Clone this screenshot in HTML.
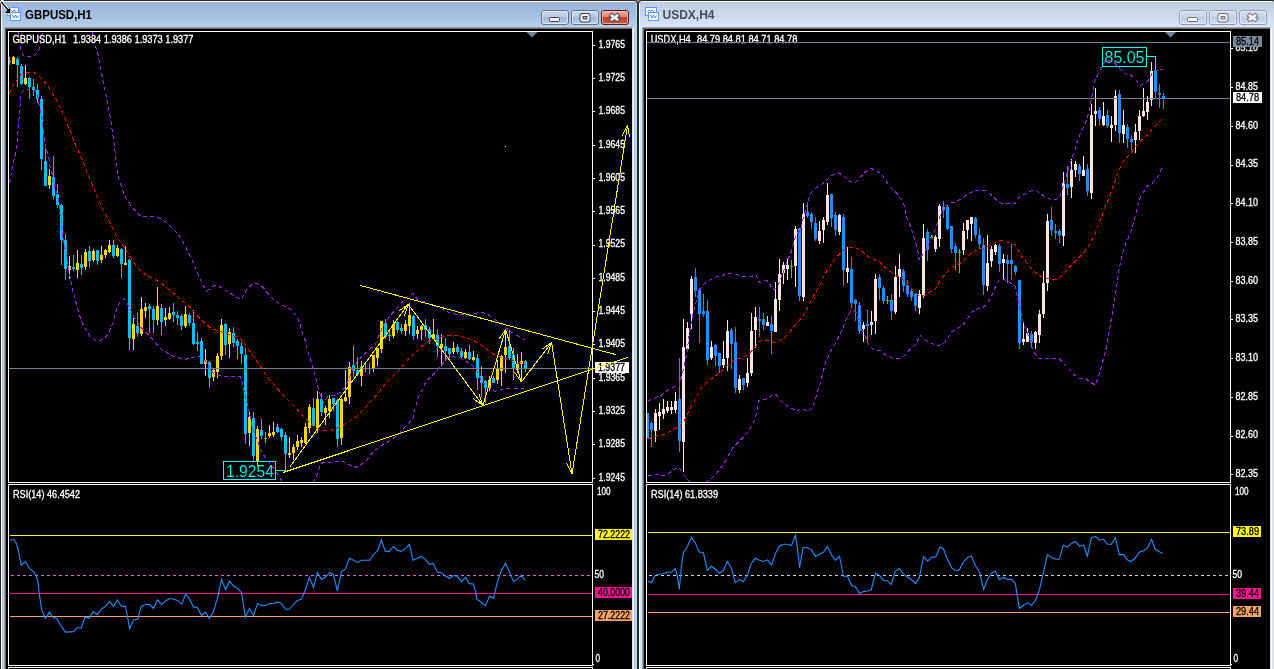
<!DOCTYPE html>
<html><head><meta charset="utf-8"><title>charts</title>
<style>html,body{margin:0;padding:0;background:#000;overflow:hidden}body{width:1274px;height:669px;position:relative}svg{position:absolute;left:0;top:0;display:block;will-change:transform}text{font-family:"Liberation Sans",sans-serif}</style>
</head><body>
<svg width="1274" height="669" viewBox="0 0 1274 669">
<defs>
<linearGradient id="ga" x1="0" y1="0" x2="0" y2="1"><stop offset="0" stop-color="#9ab2d6"/><stop offset="0.45" stop-color="#a2bedd"/><stop offset="1" stop-color="#b7d1ec"/></linearGradient>
<linearGradient id="gi" x1="0" y1="0" x2="0" y2="1"><stop offset="0" stop-color="#bccbde"/><stop offset="0.5" stop-color="#cad8e9"/><stop offset="1" stop-color="#d8e8f8"/></linearGradient>
<linearGradient id="gb" x1="0" y1="0" x2="0" y2="1"><stop offset="0" stop-color="#c9d9ec"/><stop offset="0.5" stop-color="#b6cbe4"/><stop offset="0.5" stop-color="#9fb9d9"/><stop offset="1" stop-color="#b9cfe8"/></linearGradient>
<linearGradient id="gbi" x1="0" y1="0" x2="0" y2="1"><stop offset="0" stop-color="#d3deec"/><stop offset="0.5" stop-color="#c6d4e6"/><stop offset="0.5" stop-color="#bccce1"/><stop offset="1" stop-color="#d0dcec"/></linearGradient>
<linearGradient id="gr" x1="0" y1="0" x2="0" y2="1"><stop offset="0" stop-color="#eeb4a4"/><stop offset="0.48" stop-color="#dd8068"/><stop offset="0.5" stop-color="#c4462a"/><stop offset="1" stop-color="#c8583c"/></linearGradient>
<clipPath id="cl"><rect x="9" y="32" width="583" height="450"/></clipPath>
<clipPath id="cr"><rect x="647" y="32" width="583" height="450"/></clipPath>
</defs>
<rect x="0" y="0" width="1274" height="669" fill="#000" />
<rect x="0" y="0" width="638" height="669" fill="#b7cfe9" />
<rect x="0" y="0" width="638" height="28" fill="url(#ga)" />
<rect x="0" y="0" width="1" height="669" fill="#2a2a2a" />
<rect x="637" y="0" width="1" height="669" fill="#2a2a2a" />
<rect x="0" y="0" width="638" height="1" fill="#2a2a2a" />
<rect x="1" y="1" width="1" height="669" fill="#fff" />
<rect x="1" y="1" width="636" height="1" fill="#fff" />
<rect x="636" y="2" width="1" height="669" fill="#9fe3f7" />
<polygon points="0,0 3.5,0 0,3.5" fill="#808080"/>
<polygon points="638,0 634.5,0 638,3.5" fill="#808080"/>
<path d="M0.5 4 Q0.5 0.5 4 0.5" stroke="#2a2a2a" stroke-width="1" fill="none"/>
<path d="M637.5 4 Q637.5 0.5 634 0.5" stroke="#2a2a2a" stroke-width="1" fill="none"/>
<rect x="4" y="27" width="630" height="642" fill="#a0a0a0" />
<rect x="5" y="28" width="629" height="641" fill="#696969" />
<rect x="632" y="28" width="1" height="669" fill="#e3e3e3" />
<rect x="633" y="27" width="1" height="669" fill="#fff" />
<rect x="6" y="29" width="626" height="640" fill="#000" />
<rect x="638" y="0" width="638" height="669" fill="#d6e3f3" />
<rect x="638" y="0" width="638" height="28" fill="url(#gi)" />
<rect x="638" y="0" width="1" height="669" fill="#2a2a2a" />
<rect x="1275" y="0" width="1" height="669" fill="#2a2a2a" />
<rect x="638" y="0" width="638" height="1" fill="#2a2a2a" />
<rect x="639" y="1" width="1" height="669" fill="#fff" />
<rect x="639" y="1" width="636" height="1" fill="#fff" />
<polygon points="638,0 641.5,0 638,3.5" fill="#808080"/>
<polygon points="1276,0 1272.5,0 1276,3.5" fill="#808080"/>
<path d="M638.5 4 Q638.5 0.5 642 0.5" stroke="#2a2a2a" stroke-width="1" fill="none"/>
<path d="M1275.5 4 Q1275.5 0.5 1272 0.5" stroke="#2a2a2a" stroke-width="1" fill="none"/>
<rect x="642" y="27" width="630" height="642" fill="#a0a0a0" />
<rect x="643" y="28" width="629" height="641" fill="#696969" />
<rect x="1270" y="28" width="1" height="669" fill="#e3e3e3" />
<rect x="1271" y="27" width="1" height="669" fill="#fff" />
<rect x="644" y="29" width="626" height="640" fill="#000" />
<g shape-rendering="crispEdges">
<rect x="7.5" y="7.5" width="11" height="8" fill="#fff" stroke="#5a98f8" stroke-width="1"/>
</g>
<polyline points="9.5,11.5 11,10 12.5,11.5 14,10 15.5,12" fill="none" stroke="#4a8cff" stroke-width="1" />
<g shape-rendering="crispEdges">
<rect x="10.5" y="12.5" width="10" height="8" fill="#fff" stroke="#5a98f8" stroke-width="1"/>
</g>
<polyline points="12.5,15 14,18 15.5,15 17,18 18.5,15.5" fill="none" stroke="#4a8cff" stroke-width="1" />
<g shape-rendering="crispEdges">
<rect x="645.5" y="7.5" width="11" height="8" fill="#fff" stroke="#5a98f8" stroke-width="1"/>
</g>
<polyline points="647.5,11.5 649,10 650.5,11.5 652,10 653.5,12" fill="none" stroke="#4a8cff" stroke-width="1" />
<g shape-rendering="crispEdges">
<rect x="648.5" y="12.5" width="10" height="8" fill="#fff" stroke="#5a98f8" stroke-width="1"/>
</g>
<polyline points="650.5,15 652,18 653.5,15 655,18 656.5,15.5" fill="none" stroke="#4a8cff" stroke-width="1" />
<text x="25" y="19" font-size="12" fill="#000" text-anchor="start" font-weight="bold" textLength="67" lengthAdjust="spacingAndGlyphs">GBPUSD,H1</text>
<text x="662.5" y="19" font-size="12" fill="#434d57" text-anchor="start" font-weight="bold" textLength="52" lengthAdjust="spacingAndGlyphs">USDX,H4</text>
<rect x="541.5" y="10.5" width="27" height="14" rx="2.5" fill="url(#gb)" stroke="#5f6f8f" stroke-width="1"/>
<rect x="542.5" y="11.5" width="25" height="12" rx="1.5" fill="none" stroke="#fff" stroke-opacity="0.55" stroke-width="1"/>
<rect x="549.5" y="17.5" width="10" height="4" rx="1" fill="#f4f4f4" stroke="#3c4254" stroke-width="1"/>
<rect x="571.5" y="10.5" width="27" height="14" rx="2.5" fill="url(#gb)" stroke="#5f6f8f" stroke-width="1"/>
<rect x="572.5" y="11.5" width="25" height="12" rx="1.5" fill="none" stroke="#fff" stroke-opacity="0.55" stroke-width="1"/>
<rect x="581.5" y="15" width="7" height="5.5" rx="1" fill="none" stroke="#3c4254" stroke-width="4"/>
<rect x="581.5" y="15" width="7" height="5.5" rx="1" fill="none" stroke="#f4f4f4" stroke-width="2.2"/>
<rect x="601.5" y="10.5" width="27" height="14" rx="2.5" fill="url(#gr)" stroke="#501820" stroke-width="1"/>
<rect x="602.5" y="11.5" width="25" height="12" rx="1.5" fill="none" stroke="#f6cfc6" stroke-opacity="0.7" stroke-width="1"/>
<path d="M611.8 15.6L617.2 19.4M617.2 15.6L611.8 19.4" stroke="#3c4254" stroke-width="4.6" stroke-linecap="square" fill="none"/>
<path d="M611.8 15.6L617.2 19.4M617.2 15.6L611.8 19.4" stroke="#f4f4f4" stroke-width="2.7" stroke-linecap="square" fill="none"/>
<rect x="1179.5" y="10.5" width="27" height="14" rx="2.5" fill="url(#gbi)" stroke="#8f9bbb" stroke-width="1"/>
<rect x="1180.5" y="11.5" width="25" height="12" rx="1.5" fill="none" stroke="#fff" stroke-opacity="0.55" stroke-width="1"/>
<rect x="1187.5" y="17.5" width="10" height="4" rx="1" fill="#f4f4f4" stroke="#6a7288" stroke-width="1"/>
<rect x="1209.5" y="10.5" width="27" height="14" rx="2.5" fill="url(#gbi)" stroke="#8f9bbb" stroke-width="1"/>
<rect x="1210.5" y="11.5" width="25" height="12" rx="1.5" fill="none" stroke="#fff" stroke-opacity="0.55" stroke-width="1"/>
<rect x="1219.5" y="15" width="7" height="5.5" rx="1" fill="none" stroke="#6a7288" stroke-width="4"/>
<rect x="1219.5" y="15" width="7" height="5.5" rx="1" fill="none" stroke="#f4f4f4" stroke-width="2.2"/>
<rect x="1239.5" y="10.5" width="27" height="14" rx="2.5" fill="url(#gbi)" stroke="#8f9bbb" stroke-width="1"/>
<rect x="1240.5" y="11.5" width="25" height="12" rx="1.5" fill="none" stroke="#fff" stroke-opacity="0.55" stroke-width="1"/>
<path d="M1249.8 15.6L1255.2 19.4M1255.2 15.6L1249.8 19.4" stroke="#6a7288" stroke-width="4.6" stroke-linecap="square" fill="none"/>
<path d="M1249.8 15.6L1255.2 19.4M1255.2 15.6L1249.8 19.4" stroke="#f4f4f4" stroke-width="2.7" stroke-linecap="square" fill="none"/>
<g shape-rendering="crispEdges">
<g clip-path="url(#cl)">
<path d="M13 56h1v8h-1zM12 57h3v7h-3zM25 65h1v20h-1zM24 78h3v6h-3zM49 169h1v20h-1zM48 176h3v9h-3zM69 256h1v23h-1zM68 266h3v4h-3zM77 250h1v28h-1zM76 263h3v7h-3zM85 249h1v21h-1zM84 252h3v15h-3zM93 249h1v13h-1zM92 251h3v9h-3zM101 246h1v17h-1zM100 255h3v5h-3zM105 249h1v9h-1zM104 250h3v5h-3zM109 240h1v13h-1zM108 245h3v7h-3zM117 245h1v12h-1zM116 248h3v8h-3zM125 246h1v19h-1zM124 263h3v2h-3zM133 318h1v32h-1zM132 324h3v15h-3zM141 297h1v39h-1zM140 309h3v25h-3zM145 303h1v15h-1zM144 307h3v4h-3zM157 287h1v38h-1zM156 306h3v14h-3zM165 308h1v18h-1zM164 317h3v3h-3zM169 307h1v13h-1zM168 313h3v6h-3zM185 306h1v22h-1zM184 314h3v12h-3zM205 349h1v27h-1zM204 360h3v4h-3zM213 368h1v13h-1zM212 370h3v7h-3zM217 353h1v25h-1zM216 356h3v16h-3zM221 319h1v41h-1zM220 325h3v31h-3zM229 328h1v30h-1zM228 332h3v12h-3zM249 412h1v34h-1zM248 417h3v16h-3zM257 426h1v41h-1zM256 429h3v33h-3zM269 425h1v13h-1zM268 433h3v3h-3zM273 422h1v15h-1zM272 432h3v3h-3zM289 437h1v21h-1zM288 453h3v2h-3zM293 444h1v16h-1zM292 447h3v6h-3zM297 435h1v15h-1zM296 441h3v6h-3zM301 437h1v10h-1zM300 440h3v3h-3zM305 423h1v21h-1zM304 427h3v16h-3zM309 404h1v29h-1zM308 407h3v21h-3zM317 391h1v42h-1zM316 399h3v29h-3zM325 406h1v19h-1zM324 408h3v5h-3zM329 395h1v23h-1zM328 399h3v12h-3zM341 398h1v47h-1zM340 399h3v39h-3zM345 370h1v32h-1zM344 397h3v4h-3zM349 362h1v42h-1zM348 367h3v30h-3zM361 361h1v25h-1zM360 367h3v9h-3zM373 355h1v17h-1zM372 355h3v13h-3zM377 348h1v18h-1zM376 348h3v10h-3zM381 321h1v32h-1zM380 321h3v28h-3zM393 320h1v18h-1zM392 324h3v12h-3zM405 320h1v16h-1zM404 324h3v7h-3zM409 303h1v31h-1zM408 315h3v11h-3zM417 326h1v13h-1zM416 330h3v4h-3zM421 325h1v15h-1zM420 326h3v4h-3zM433 319h1v21h-1zM432 334h3v5h-3zM441 334h1v32h-1zM440 344h3v4h-3zM453 342h1v12h-1zM452 348h3v4h-3zM465 349h1v10h-1zM464 352h3v6h-3zM473 351h1v10h-1zM472 357h3v3h-3zM489 376h1v15h-1zM488 380h3v8h-3zM497 360h1v24h-1zM496 369h3v11h-3zM501 355h1v31h-1zM500 356h3v15h-3zM505 329h1v44h-1zM504 347h3v8h-3zM517 354h1v19h-1zM516 364h3v6h-3zM521 352h1v28h-1zM520 361h3v3h-3z" fill="#ffd400"/>
<path d="M17 57h1v30h-1zM16 59h3v6h-3zM21 64h1v21h-1zM20 66h3v18h-3zM29 77h1v22h-1zM28 78h3v9h-3zM33 79h1v17h-1zM32 87h3v3h-3zM37 84h1v19h-1zM36 90h3v9h-3zM41 96h1v74h-1zM40 99h3v60h-3zM45 148h1v38h-1zM44 161h3v25h-3zM53 156h1v43h-1zM52 177h3v19h-3zM57 184h1v24h-1zM56 194h3v11h-3zM61 204h1v61h-1zM60 205h3v35h-3zM65 234h1v46h-1zM64 240h3v29h-3zM73 255h1v16h-1zM72 267h3v2h-3zM81 255h1v20h-1zM80 264h3v4h-3zM89 246h1v22h-1zM88 251h3v10h-3zM97 250h1v15h-1zM96 250h3v11h-3zM113 240h1v18h-1zM112 245h3v11h-3zM121 248h1v30h-1zM120 249h3v15h-3zM129 259h1v91h-1zM128 260h3v78h-3zM137 313h1v24h-1zM136 326h3v7h-3zM149 304h1v29h-1zM148 306h3v3h-3zM153 306h1v27h-1zM152 309h3v11h-3zM161 304h1v31h-1zM160 308h3v14h-3zM173 303h1v19h-1zM172 312h3v3h-3zM177 311h1v14h-1zM176 315h3v3h-3zM181 314h1v16h-1zM180 316h3v10h-3zM189 313h1v13h-1zM188 315h3v8h-3zM193 310h1v35h-1zM192 323h3v21h-3zM197 332h1v19h-1zM196 342h3v2h-3zM201 338h1v26h-1zM200 341h3v23h-3zM209 361h1v27h-1zM208 362h3v16h-3zM225 323h1v32h-1zM224 324h3v21h-3zM233 327h1v20h-1zM232 333h3v10h-3zM237 339h1v20h-1zM236 341h3v5h-3zM241 342h1v22h-1zM240 346h3v8h-3zM245 348h1v96h-1zM244 355h3v79h-3zM253 412h1v49h-1zM252 418h3v38h-3zM261 419h1v20h-1zM260 430h3v6h-3zM277 424h1v9h-1zM276 427h3v5h-3zM281 428h1v13h-1zM280 429h3v8h-3zM285 432h1v38h-1zM284 435h3v19h-3zM313 398h1v28h-1zM312 408h3v18h-3zM321 393h1v23h-1zM320 399h3v13h-3zM333 398h1v13h-1zM332 398h3v6h-3zM337 399h1v48h-1zM336 400h3v39h-3zM353 346h1v31h-1zM352 365h3v6h-3zM357 357h1v19h-1zM356 370h3v4h-3zM385 319h1v20h-1zM384 323h3v14h-3zM397 321h1v12h-1zM396 322h3v8h-3zM401 324h1v10h-1zM400 328h3v3h-3zM413 315h1v25h-1zM412 316h3v20h-3zM425 319h1v18h-1zM424 325h3v5h-3zM429 327h1v17h-1zM428 329h3v9h-3zM437 329h1v28h-1zM436 335h3v11h-3zM445 338h1v23h-1zM444 346h3v5h-3zM449 348h1v10h-1zM448 348h3v6h-3zM457 344h1v10h-1zM456 347h3v5h-3zM461 348h1v10h-1zM460 351h3v6h-3zM469 345h1v15h-1zM468 352h3v7h-3zM477 354h1v36h-1zM476 358h3v20h-3zM481 366h1v31h-1zM480 376h3v7h-3zM485 380h1v23h-1zM484 381h3v7h-3zM493 376h1v7h-1zM492 378h3v5h-3zM509 330h1v30h-1zM508 346h3v12h-3zM513 348h1v32h-1zM512 355h3v13h-3zM525 360h1v12h-1zM524 361h3v8h-3z" fill="#00bfff"/>
<path d="M9 57h1v8h-1zM8 61h3v1h-3zM265 432h1v11h-1zM264 438h3v1h-3zM365 363h1v9h-1zM364 368h3v1h-3zM369 363h1v11h-1zM368 368h3v1h-3zM389 330h1v11h-1zM388 335h3v1h-3z" fill="#00ff00"/>
<rect x="9" y="368" width="583" height="1" fill="#708090" />
<polyline points="18.7,32 19.5,42 20.6,50.8 23,55 28.7,57 35,55 38.8,50.8 40.5,42 42.5,32" fill="none" stroke="#a020f0" stroke-width="1" stroke-dasharray="4 3" />
<polyline points="9.6,183.4 12,169 15.8,152 17.4,140 19.3,115 20.5,100 21.2,93 24.3,89.8 27,89 31,89.5 35.6,91 38,97.5 39.4,106 41.3,116 42,122.6 43.8,134 45.7,145.7 48.8,158 50.4,169 52.7,175.5 55,188 58.2,196 59.8,213 61.4,220 62.6,234 66,254.7 70,276.6 72.6,290.4 75.7,301.4 79.6,315.5 83.5,325.7 89.8,336.7 97.7,341.4 104,339 108.7,333.6 113.4,321.8 116.5,309 119.7,303 124.4,299 127.5,303.7 132.2,314 140,326.5 151,337.5 162,350 173,356 184,359.5 191.6,358 197.8,355.7 205,360.4 209.6,367.5 213.5,373.8 219.8,375.8 229.2,376.9 240.2,376.9 242.6,384 245,395 248.9,410.6 252,426.3 256,437 259,445 261.6,451.4 265.3,457.7 270.4,464 275.4,470.9 279,476 282.3,481.6 283,483" fill="none" stroke="#a020f0" stroke-width="1" stroke-dasharray="4 3" />
<polyline points="313,483 313.7,481.6 317.5,474 320.6,464 324.4,462 332,462 343.2,461.5 349.5,464.6 355.8,467.5 360,465 365.9,461.3 370.6,455 376,449.5 381.6,445.6 387,442.4 392.6,438.5 398,435.4 402.8,429 408.3,423.6 413,418 414.6,411 416,405.5 417.7,399 420,393.8 423.2,388.3 425.6,382 431,376.5 436.5,371 441.3,365.6 446.8,358.5 453,356.6 459.3,357.7 465.6,360.8 471.9,364.8 476.6,370.3 479.7,377.3 481.3,382 484.4,384 489,387.5 494.6,391.4 503.3,389 512.7,388.6 523.7,388.6" fill="none" stroke="#a020f0" stroke-width="1" stroke-dasharray="4 3" />
<polyline points="92.2,32 95,44 98.5,57 102.8,79.7 105.4,92 109.1,112.4 110.4,117.6 114.8,149 117.3,171.7 118,175.5 122.6,189.7 124.2,195 132,207 138.3,214.6 143,216.2 155.6,216.2 166.6,222.5 178.3,234.2 185.4,246 193.2,262.5 196.6,270.8 201.3,281.8 206.8,291.2 213.8,285.7 218.6,285.7 229.5,292.8 241.3,299.8 244.2,293.7 247.2,288.9 252,284.7 256.1,283.5 259.7,284.7 263.3,287.7 268,293.7 273.5,299.6 279.4,303.8 285.4,306.8 291.4,309.8 296.2,315.2 299.1,321.2 300.7,327.1 302.4,333.7 305.1,339.7 307.7,351 311.7,363.5 315.6,377.7 318,387 320.3,395 323.4,402 328.1,396.5 336,395 342.3,391 346.2,385.5 348.6,379 353.3,368 357.3,361.6 362.7,355.7 368.3,350.6 375.2,344.7 379.2,335 384,324 391.8,313.8 401.2,303.5 407.5,296.5 413,293.3 417,298.8 428,303.5 440.5,308.3 451.5,313.8 464,314.5 473.4,313.8 481.3,312.2 486.8,313.8 492.3,317.7 504,326.3 511,331.8 517.4,335.7 522.9,338.9 525,340" fill="none" stroke="#a020f0" stroke-width="1" stroke-dasharray="4 3" />
<polyline points="9.3,93.6 12.4,86.6 16.8,80.4 20.6,74.7 25,72.5 33.8,72.5 38.2,75.3 43.8,81 48.2,86.6 52,93 56.4,99.6 59.5,106 62,111.6 64.5,117 67,123.3 69.6,129.6 72,135.2 74,141.5 77,147.8 79.4,153.5 82.1,159 84.6,165.4 87.1,172.3 89.6,178.7 96.7,195 102.2,208.5 107,217 116.3,235.8 125,248.4 133.6,262.5 141.6,272.4 154,279 160.5,282.6 166.6,287.6 177.7,296.7 190.3,307.7 201.3,320 210.7,328 217,330.4 229.5,334.4 240.5,338.3 249.7,351 258.3,363.5 266.1,375.3 275.6,387 285.8,398 296.8,409 303.8,417 309.3,422.4 314,427 320.3,430.3 326.6,431 332.9,429.5 337.6,427.9 343,425.3 350,420.8 356.4,416.7 362.7,410.6 367.5,405.5 372,399.7 377.7,393.8 383.9,385.5 387,382 399,370 409,358.5 421.6,346.7 427.9,342 437.3,338 446.8,335.7 456.2,335.3 467.2,338 475,341.2 481.3,345 487.6,349.9 493,353.8 500,357 506.4,358.5 514.2,360.8 522,363.2 525,364" fill="none" stroke="#ff0000" stroke-width="1" stroke-dasharray="4 3" />
</g>
<rect x="223.5" y="461.5" width="52" height="18" fill="none" stroke="#00ffff" stroke-width="1"/>
<line x1="276" y1="470.5" x2="286" y2="470.5" stroke="#00ffff" stroke-width="1" />
</g>
<text x="226" y="476.5" font-size="17" fill="#00ffff" text-anchor="start" font-weight="normal" textLength="48" lengthAdjust="spacingAndGlyphs" stroke="#000" stroke-width="0.2">1.9254</text>
<g shape-rendering="crispEdges">
<g clip-path="url(#cr)">
<path d="M655 409h1v33h-1zM654 413h3v18h-3zM659 403h1v27h-1zM658 412h3v4h-3zM663 399h1v20h-1zM662 409h3v5h-3zM667 401h1v12h-1zM666 407h3v4h-3zM671 401h1v13h-1zM670 407h3v3h-3zM675 392h1v21h-1zM674 401h3v9h-3zM683 319h1v153h-1zM682 347h3v95h-3zM687 322h1v27h-1zM686 328h3v21h-3zM691 276h1v53h-1zM690 279h3v35h-3zM711 341h1v19h-1zM710 347h3v11h-3zM723 341h1v27h-1zM722 359h3v6h-3zM727 320h1v51h-1zM726 331h3v27h-3zM739 375h1v18h-1zM738 379h3v11h-3zM747 358h1v29h-1zM746 373h3v10h-3zM751 313h1v63h-1zM750 331h3v42h-3zM755 307h1v41h-1zM754 317h3v13h-3zM767 316h1v10h-1zM766 322h3v4h-3zM775 282h1v50h-1zM774 299h3v33h-3zM779 259h1v52h-1zM778 274h3v26h-3zM783 262h1v22h-1zM782 265h3v8h-3zM787 259h1v21h-1zM786 265h3v4h-3zM795 226h1v61h-1zM794 229h3v37h-3zM803 203h1v98h-1zM802 214h3v83h-3zM819 221h1v23h-1zM818 231h3v10h-3zM823 217h1v26h-1zM822 220h3v10h-3zM827 183h1v42h-1zM826 195h3v27h-3zM839 214h1v21h-1zM838 215h3v17h-3zM847 247h1v36h-1zM846 268h3v4h-3zM863 322h1v20h-1zM862 325h3v4h-3zM871 311h1v24h-1zM870 322h3v3h-3zM875 274h1v60h-1zM874 279h3v42h-3zM895 266h1v48h-1zM894 277h3v35h-3zM899 254h1v43h-1zM898 269h3v8h-3zM919 290h1v24h-1zM918 294h3v14h-3zM923 224h1v74h-1zM922 238h3v58h-3zM935 235h1v17h-1zM934 237h3v12h-3zM939 204h1v43h-1zM938 206h3v33h-3zM963 223h1v32h-1zM962 231h3v19h-3zM967 220h1v19h-1zM966 220h3v10h-3zM971 217h1v24h-1zM970 217h3v7h-3zM987 235h1v56h-1zM986 263h3v23h-3zM991 246h1v21h-1zM990 249h3v12h-3zM995 244h1v11h-1zM994 245h3v7h-3zM1003 254h1v26h-1zM1002 259h3v4h-3zM1023 323h1v22h-1zM1022 339h3v3h-3zM1027 328h1v14h-1zM1026 333h3v9h-3zM1035 331h1v18h-1zM1034 332h3v11h-3zM1039 310h1v33h-1zM1038 314h3v21h-3zM1043 271h1v47h-1zM1042 283h3v31h-3zM1047 214h1v77h-1zM1046 221h3v62h-3zM1063 172h1v74h-1zM1062 183h3v53h-3zM1071 159h1v39h-1zM1070 170h3v17h-3zM1075 161h1v16h-1zM1074 164h3v6h-3zM1083 156h1v20h-1zM1082 170h3v6h-3zM1091 104h1v95h-1zM1090 115h3v78h-3zM1095 88h1v38h-1zM1094 111h3v3h-3zM1103 102h1v24h-1zM1102 116h3v9h-3zM1111 116h1v26h-1zM1110 125h3v3h-3zM1115 90h1v41h-1zM1114 96h3v29h-3zM1123 110h1v33h-1zM1122 125h3v9h-3zM1135 124h1v29h-1zM1134 132h3v8h-3zM1139 110h1v30h-1zM1138 116h3v15h-3zM1143 88h1v29h-1zM1142 111h3v5h-3zM1147 96h1v24h-1zM1146 102h3v10h-3zM1151 62h1v44h-1zM1150 71h3v29h-3z" fill="#ffe4e1"/>
<path d="M647 413h1v25h-1zM646 413h3v25h-3zM651 421h1v26h-1zM650 423h3v7h-3zM679 358h1v94h-1zM678 399h3v42h-3zM695 268h1v29h-1zM694 277h3v14h-3zM699 288h1v55h-1zM698 290h3v24h-3zM703 294h1v23h-1zM702 311h3v3h-3zM707 300h1v65h-1zM706 311h3v49h-3zM715 344h1v22h-1zM714 345h3v11h-3zM719 353h1v20h-1zM718 353h3v13h-3zM731 328h1v41h-1zM730 330h3v14h-3zM735 327h1v66h-1zM734 342h3v46h-3zM743 378h1v12h-1zM742 378h3v7h-3zM759 307h1v30h-1zM758 319h3v2h-3zM763 313h1v17h-1zM762 319h3v6h-3zM771 316h1v38h-1zM770 324h3v7h-3zM799 228h1v73h-1zM798 228h3v68h-3zM807 202h1v16h-1zM806 212h3v4h-3zM811 212h1v17h-1zM810 214h3v8h-3zM815 217h1v24h-1zM814 223h3v16h-3zM831 194h1v33h-1zM830 194h3v24h-3zM835 212h1v24h-1zM834 215h3v15h-3zM843 214h1v72h-1zM842 217h3v53h-3zM851 257h1v51h-1zM850 269h3v34h-3zM855 299h1v22h-1zM854 300h3v4h-3zM859 302h1v32h-1zM858 305h3v26h-3zM867 310h1v33h-1zM866 324h3v2h-3zM879 274h1v26h-1zM878 277h3v11h-3zM883 286h1v18h-1zM882 288h3v13h-3zM891 294h1v26h-1zM890 300h3v11h-3zM903 269h1v23h-1zM902 271h3v15h-3zM907 280h1v17h-1zM906 285h3v9h-3zM911 289h1v12h-1zM910 291h3v6h-3zM915 293h1v18h-1zM914 294h3v12h-3zM927 229h1v32h-1zM926 232h3v18h-3zM943 201h1v17h-1zM942 207h3v3h-3zM947 204h1v26h-1zM946 207h3v22h-3zM951 226h1v27h-1zM950 226h3v23h-3zM955 243h1v27h-1zM954 246h3v7h-3zM975 217h1v21h-1zM974 218h3v17h-3zM979 228h1v21h-1zM978 235h3v9h-3zM983 238h1v57h-1zM982 245h3v40h-3zM999 244h1v28h-1zM998 246h3v18h-3zM1007 255h1v28h-1zM1006 260h3v4h-3zM1011 244h1v36h-1zM1010 260h3v4h-3zM1015 265h1v10h-1zM1014 266h3v6h-3zM1019 280h1v69h-1zM1018 280h3v63h-3zM1031 331h1v17h-1zM1030 334h3v8h-3zM1051 207h1v29h-1zM1050 220h3v10h-3zM1055 224h1v15h-1zM1054 231h3v2h-3zM1059 229h1v14h-1zM1058 231h3v4h-3zM1067 166h1v29h-1zM1066 184h3v4h-3zM1079 164h1v17h-1zM1078 166h3v8h-3zM1087 164h1v32h-1zM1086 169h3v22h-3zM1099 107h1v18h-1zM1098 110h3v9h-3zM1107 110h1v18h-1zM1106 115h3v11h-3zM1119 90h1v53h-1zM1118 94h3v39h-3zM1127 124h1v24h-1zM1126 127h3v12h-3zM1131 135h1v15h-1zM1130 139h3v3h-3zM1155 56h1v43h-1zM1154 70h3v22h-3zM1159 84h1v24h-1zM1158 93h3v2h-3zM1163 93h1v16h-1zM1162 96h3v3h-3z" fill="#1e90ff"/>
<path d="M791 260h1v18h-1zM790 266h3v1h-3zM887 296h1v8h-1zM886 300h3v1h-3zM931 235h1v4h-1zM930 237h3v1h-3zM959 249h1v24h-1zM958 252h3v1h-3z" fill="#00ff00"/>
<polyline points="647.6,401.2 653.8,398.5 661,395.4 666.4,391 674.3,387 679,386.3 680.5,380 682,375.8 684.5,364.8 687,352 689,336.5 691.5,320.8 694.7,306.7 697.8,295.7 700,289.4 703.3,284.5 708.8,280.6 715,277.3 721.4,275.8 726.8,273.7 733,273.4 738.6,275.3 745,276.5 754.3,277 756.7,275.8 758.2,280.5 759.8,282.8 763,280.5 766.9,280.5 770,284.5 773,290.2 777,287 779.4,282 784,270.3 788,258.5 791.2,252.2 793.6,242.8 796,235 800.6,229.5 802.2,222.4 804.6,213 807,205 808.5,199.6 810.8,193.3 814.8,188.6 820.3,185.5 825.7,181.2 831.7,175.6 837.6,172.5 843,175.2 849.6,181.2 855,183.3 859.7,177.6 865.7,171.7 871,168.4 877.7,171.3 882.4,175.2 886,181.2 890.8,187.8 896.8,193.2 901,199.1 904,205.1 905.4,211.7 907.4,219.2 910.6,227 913.7,235.7 916,244.4 918.4,253.8 919.2,260 921.6,256 926.3,249 930.2,240.4 934,232.6 938,221.6 941.2,213 944.3,206.7 949,203.5 955.3,202 961.6,198.8 967.9,194 974,191 979.6,190.2 986,191 991.4,195 996,199.6 1001.6,203.5 1015,203.5 1018,198 1022.8,195 1030.8,191 1036.3,190.5 1041,194 1045.7,197 1052,200.2 1059,198.4 1061.4,192.4 1063,186.9 1065.3,179.8 1067.7,170.4 1070,164 1072.4,157 1074.7,150.8 1077,142.6 1081,131.6 1085,123.8 1088.9,112.8 1090.4,103.4 1092.8,92.4 1095,81.4 1098.3,73.5 1101.4,66.5 1105.4,61 1111.6,60.2 1118.7,67.3 1124.2,73.5 1130.5,75 1136,79.8 1140,85.3 1146.2,82.7 1150,78.3 1152.4,72 1158.7,69.6 1163,69.6" fill="none" stroke="#a020f0" stroke-width="1" stroke-dasharray="4 3" />
<polyline points="647.6,475.8 653.8,474.7 666.4,475.3 672.7,470.3 679,467 682,472.6 687.6,479 690,483" fill="none" stroke="#a020f0" stroke-width="1" stroke-dasharray="4 3" />
<polyline points="705.5,483 706.4,482 712,478 716.6,473.4 721.4,467 726,460 732.3,448.3 737,443.6 744,436.5 749.6,430.2 755,419.2 756.7,411.4 759,400.4 765.3,399.6 771.6,395.7 775.5,394 781,401.2 787.3,405.9 792.8,409 796.7,411.4 801.4,408.3 807.7,411.4 812.4,408.3 814.8,400.4 817,394 818.7,387.8 821,380.5 823.4,371 825.7,361.6 829.7,353 833.6,346 836.8,341 842.3,329.4 847.8,316 851,310.5 855.6,311.3 858,318.4 861,327.8 864.3,334 867.4,342 869.8,346.6 874.5,349.8 880.7,351 886.2,355.3 891.7,358 898.8,358.4 904.3,356 909,350.6 914.5,345.8 917.6,340.4 920,334.9 924,339.6 930.2,342.7 936.5,345.4 942.8,344.7 947.5,338.8 950.6,332.5 955.3,329.4 961.6,326.2 967,320 971,312.9 975.7,309.3 982,308.2 986.7,304.2 990.6,298 993.8,290.9 996,284.6 999.3,280 1004,279.4 1009.5,282.3 1015,286.2 1017.3,296.4 1018.9,304.2 1021.2,313.7 1023.6,323 1026.7,331 1029.9,340 1032.2,347.4 1035,353.5 1038.8,358.7 1045,359 1059.2,358.6 1064,363.8 1070.2,370 1075,375.5 1079.7,378.7 1086,378.7 1090.6,382.6 1095.4,385 1097.7,378.7 1100,371.6 1101.6,366 1103.2,359.8 1104.8,353.5 1106.3,347.3 1108,337.8 1109.5,330.8 1111,320.6 1113.4,306.5 1115.8,292.4 1117.3,281.4 1119.2,268.8 1120.8,261 1122.6,252.8 1125,245.8 1127.3,240.3 1129.7,234.8 1132,227.7 1133.6,222.2 1135.2,216 1136.8,209.7 1138.3,203.4 1139.9,197.9 1143.8,192 1147,186.4 1152.4,183 1157.2,177.5 1160.3,171.2 1162.7,166.5" fill="none" stroke="#a020f0" stroke-width="1" stroke-dasharray="4 3" />
<polyline points="647.6,439.3 653.8,436.5 660,435.3 666.4,434.2 672.7,429.5 679,427 683.7,421.6 689,410.6 693,403.5 699.4,391.8 702.5,386.3 706.4,382.8 713.5,377.3 719.8,372.6 725.3,367.9 730.8,362.4 736.3,359.3 743.3,357.2 748.8,353.8 754.3,348.3 759,342 763.7,340 770,341.2 776.3,342.8 782.6,338.9 788.9,333.4 793.6,327 798.3,321.6 803,316 809.3,304.3 815.5,292.6 820.3,284.7 821.8,280.5 828,268.7 832.8,261.6 837.5,256 842.3,251.4 848.6,247.5 854.8,247.5 861,250.6 866.6,255.4 872,259.3 878.4,260.4 883,265.6 889.4,271.2 895.7,275.1 902,279.2 907.4,284.6 913,290 919.2,296.4 924.7,294.8 930.2,292 936.5,287.8 939.6,280.6 944.3,275.1 949,270 955.3,265.6 961.6,262.4 967.9,256 972.6,252 978.9,249 984.4,248.3 990.6,245 996,242 1001.6,240.4 1008.7,242.5 1015,244.7 1018,249.9 1022,256.5 1026.3,262.3 1031.8,269.6 1037.3,273.5 1043.5,278.3 1049.8,279 1056,279.5 1060.8,276.7 1066.3,270.4 1072.6,264 1078.9,257.8 1082.6,253.6 1088,247.3 1091.2,241 1094.4,235.6 1096.7,229.3 1099,223 1101.4,217.5 1103.8,210.4 1106,205 1108.5,199.5 1110.8,192.4 1112.9,186.9 1114.8,181.4 1117,175 1119.5,169.6 1121.8,163.3 1127.3,157 1131.3,152.5 1136.8,145 1142.2,139.5 1147.7,134.8 1153.2,127.7 1159.5,121.4 1163,118" fill="none" stroke="#ff0000" stroke-width="1" stroke-dasharray="4 3" />
</g>
<rect x="1102.5" y="47.5" width="44" height="19" fill="none" stroke="#00ffff" stroke-width="1"/>
<line x1="1147" y1="56.5" x2="1156" y2="56.5" stroke="#00ffff" stroke-width="1" />
<line x1="1155.5" y1="56" x2="1155.5" y2="70" stroke="#00ffff" stroke-width="1" />
</g>
<text x="1104.5" y="63" font-size="16.5" fill="#00ffff" text-anchor="start" font-weight="normal" textLength="40" lengthAdjust="spacingAndGlyphs" stroke="#000" stroke-width="0.2">85.05</text>
<text x="12.5" y="43" font-size="10.2" fill="#fff" text-anchor="start" font-weight="normal" textLength="54" lengthAdjust="spacingAndGlyphs" stroke="#fff" stroke-width="0.3">GBPUSD,H1</text>
<text x="73" y="43" font-size="10.2" fill="#fff" text-anchor="start" font-weight="normal" textLength="120.5" lengthAdjust="spacingAndGlyphs" stroke="#fff" stroke-width="0.3">1.9384 1.9386 1.9373 1.9377</text>
<text x="650.7" y="43" font-size="10.2" fill="#fff" text-anchor="start" font-weight="normal" textLength="40" lengthAdjust="spacingAndGlyphs" stroke="#fff" stroke-width="0.3">USDX,H4</text>
<text x="697" y="43" font-size="10.2" fill="#fff" text-anchor="start" font-weight="normal" textLength="100.3" lengthAdjust="spacingAndGlyphs" stroke="#fff" stroke-width="0.3">84.79 84.81 84.71 84.78</text>
<g shape-rendering="crispEdges">
<rect x="647" y="98" width="583" height="1" fill="#708090" />
<rect x="647" y="42" width="583" height="1" fill="#708090" />
</g>
<polygon points="526.5,32 537.5,32 532,37.5" fill="#708090"/>
<polygon points="1165,32 1176,32 1170.5,37.5" fill="#708090"/>
<g shape-rendering="crispEdges">
<rect x="8" y="31" width="585" height="1" fill="#fff" />
<rect x="8" y="31" width="1" height="452" fill="#fff" />
<rect x="592" y="31" width="1" height="452" fill="#fff" />
<rect x="8" y="482" width="585" height="1" fill="#fff" />
<rect x="8" y="484" width="585" height="1" fill="#fff" />
<rect x="8" y="484" width="1" height="182" fill="#fff" />
<rect x="592" y="484" width="1" height="182" fill="#fff" />
<rect x="8" y="665" width="585" height="1" fill="#fff" />
<rect x="8" y="667" width="585" height="1" fill="#fff" />
<rect x="8" y="667" width="1" height="2" fill="#fff" />
<rect x="592" y="667" width="1" height="2" fill="#fff" />
<rect x="593" y="664" width="1" height="1" fill="#fff" />
</g>
<g shape-rendering="crispEdges">
<rect x="646" y="31" width="585" height="1" fill="#fff" />
<rect x="646" y="31" width="1" height="452" fill="#fff" />
<rect x="1230" y="31" width="1" height="452" fill="#fff" />
<rect x="646" y="482" width="585" height="1" fill="#fff" />
<rect x="646" y="484" width="585" height="1" fill="#fff" />
<rect x="646" y="484" width="1" height="182" fill="#fff" />
<rect x="1230" y="484" width="1" height="182" fill="#fff" />
<rect x="646" y="665" width="585" height="1" fill="#fff" />
<rect x="646" y="667" width="585" height="1" fill="#fff" />
<rect x="646" y="667" width="1" height="2" fill="#fff" />
<rect x="1230" y="667" width="1" height="2" fill="#fff" />
<rect x="1231" y="664" width="1" height="1" fill="#fff" />
</g>
<rect x="593" y="45" width="2" height="1" fill="#fff" shape-rendering="crispEdges"/>
<text x="598.5" y="47.6" font-size="10" fill="#fff" text-anchor="start" font-weight="normal" textLength="26.5" lengthAdjust="spacingAndGlyphs" stroke="#fff" stroke-width="0.3">1.9765</text>
<rect x="593" y="78" width="2" height="1" fill="#fff" shape-rendering="crispEdges"/>
<text x="598.5" y="80.9" font-size="10" fill="#fff" text-anchor="start" font-weight="normal" textLength="26.5" lengthAdjust="spacingAndGlyphs" stroke="#fff" stroke-width="0.3">1.9725</text>
<rect x="593" y="111" width="2" height="1" fill="#fff" shape-rendering="crispEdges"/>
<text x="598.5" y="114.2" font-size="10" fill="#fff" text-anchor="start" font-weight="normal" textLength="26.5" lengthAdjust="spacingAndGlyphs" stroke="#fff" stroke-width="0.3">1.9685</text>
<rect x="593" y="145" width="2" height="1" fill="#fff" shape-rendering="crispEdges"/>
<text x="598.5" y="147.5" font-size="10" fill="#fff" text-anchor="start" font-weight="normal" textLength="26.5" lengthAdjust="spacingAndGlyphs" stroke="#fff" stroke-width="0.3">1.9645</text>
<rect x="593" y="178" width="2" height="1" fill="#fff" shape-rendering="crispEdges"/>
<text x="598.5" y="180.8" font-size="10" fill="#fff" text-anchor="start" font-weight="normal" textLength="26.5" lengthAdjust="spacingAndGlyphs" stroke="#fff" stroke-width="0.3">1.9605</text>
<rect x="593" y="211" width="2" height="1" fill="#fff" shape-rendering="crispEdges"/>
<text x="598.5" y="214.1" font-size="10" fill="#fff" text-anchor="start" font-weight="normal" textLength="26.5" lengthAdjust="spacingAndGlyphs" stroke="#fff" stroke-width="0.3">1.9565</text>
<rect x="593" y="245" width="2" height="1" fill="#fff" shape-rendering="crispEdges"/>
<text x="598.5" y="247.4" font-size="10" fill="#fff" text-anchor="start" font-weight="normal" textLength="26.5" lengthAdjust="spacingAndGlyphs" stroke="#fff" stroke-width="0.3">1.9525</text>
<rect x="593" y="278" width="2" height="1" fill="#fff" shape-rendering="crispEdges"/>
<text x="598.5" y="280.7" font-size="10" fill="#fff" text-anchor="start" font-weight="normal" textLength="26.5" lengthAdjust="spacingAndGlyphs" stroke="#fff" stroke-width="0.3">1.9485</text>
<rect x="593" y="311" width="2" height="1" fill="#fff" shape-rendering="crispEdges"/>
<text x="598.5" y="314" font-size="10" fill="#fff" text-anchor="start" font-weight="normal" textLength="26.5" lengthAdjust="spacingAndGlyphs" stroke="#fff" stroke-width="0.3">1.9445</text>
<rect x="593" y="344" width="2" height="1" fill="#fff" shape-rendering="crispEdges"/>
<text x="598.5" y="347.3" font-size="10" fill="#fff" text-anchor="start" font-weight="normal" textLength="26.5" lengthAdjust="spacingAndGlyphs" stroke="#fff" stroke-width="0.3">1.9405</text>
<rect x="593" y="378" width="2" height="1" fill="#fff" shape-rendering="crispEdges"/>
<text x="598.5" y="380.6" font-size="10" fill="#fff" text-anchor="start" font-weight="normal" textLength="26.5" lengthAdjust="spacingAndGlyphs" stroke="#fff" stroke-width="0.3">1.9365</text>
<rect x="593" y="411" width="2" height="1" fill="#fff" shape-rendering="crispEdges"/>
<text x="598.5" y="413.9" font-size="10" fill="#fff" text-anchor="start" font-weight="normal" textLength="26.5" lengthAdjust="spacingAndGlyphs" stroke="#fff" stroke-width="0.3">1.9325</text>
<rect x="593" y="444" width="2" height="1" fill="#fff" shape-rendering="crispEdges"/>
<text x="598.5" y="447.2" font-size="10" fill="#fff" text-anchor="start" font-weight="normal" textLength="26.5" lengthAdjust="spacingAndGlyphs" stroke="#fff" stroke-width="0.3">1.9285</text>
<rect x="593" y="478" width="2" height="1" fill="#fff" shape-rendering="crispEdges"/>
<text x="598.5" y="480.5" font-size="10" fill="#fff" text-anchor="start" font-weight="normal" textLength="26.5" lengthAdjust="spacingAndGlyphs" stroke="#fff" stroke-width="0.3">1.9245</text>
<rect x="595" y="362" width="34" height="11" fill="#fff" shape-rendering="crispEdges"/>
<text x="598" y="370.5" font-size="10" fill="#000" text-anchor="start" font-weight="normal" textLength="27" lengthAdjust="spacingAndGlyphs" stroke="#000" stroke-width="0.3">1.9377</text>
<rect x="1231" y="48" width="2" height="1" fill="#fff" shape-rendering="crispEdges"/>
<text x="1235.5" y="51.3" font-size="10" fill="#fff" text-anchor="start" font-weight="normal" textLength="22.5" lengthAdjust="spacingAndGlyphs" stroke="#fff" stroke-width="0.3">85.10</text>
<rect x="1231" y="87" width="2" height="1" fill="#fff" shape-rendering="crispEdges"/>
<text x="1235.5" y="90" font-size="10" fill="#fff" text-anchor="start" font-weight="normal" textLength="22.5" lengthAdjust="spacingAndGlyphs" stroke="#fff" stroke-width="0.3">84.85</text>
<rect x="1231" y="126" width="2" height="1" fill="#fff" shape-rendering="crispEdges"/>
<text x="1235.5" y="128.7" font-size="10" fill="#fff" text-anchor="start" font-weight="normal" textLength="22.5" lengthAdjust="spacingAndGlyphs" stroke="#fff" stroke-width="0.3">84.60</text>
<rect x="1231" y="165" width="2" height="1" fill="#fff" shape-rendering="crispEdges"/>
<text x="1235.5" y="167.4" font-size="10" fill="#fff" text-anchor="start" font-weight="normal" textLength="22.5" lengthAdjust="spacingAndGlyphs" stroke="#fff" stroke-width="0.3">84.35</text>
<rect x="1231" y="203" width="2" height="1" fill="#fff" shape-rendering="crispEdges"/>
<text x="1235.5" y="206.1" font-size="10" fill="#fff" text-anchor="start" font-weight="normal" textLength="22.5" lengthAdjust="spacingAndGlyphs" stroke="#fff" stroke-width="0.3">84.10</text>
<rect x="1231" y="242" width="2" height="1" fill="#fff" shape-rendering="crispEdges"/>
<text x="1235.5" y="244.8" font-size="10" fill="#fff" text-anchor="start" font-weight="normal" textLength="22.5" lengthAdjust="spacingAndGlyphs" stroke="#fff" stroke-width="0.3">83.85</text>
<rect x="1231" y="281" width="2" height="1" fill="#fff" shape-rendering="crispEdges"/>
<text x="1235.5" y="283.5" font-size="10" fill="#fff" text-anchor="start" font-weight="normal" textLength="22.5" lengthAdjust="spacingAndGlyphs" stroke="#fff" stroke-width="0.3">83.60</text>
<rect x="1231" y="319" width="2" height="1" fill="#fff" shape-rendering="crispEdges"/>
<text x="1235.5" y="322.2" font-size="10" fill="#fff" text-anchor="start" font-weight="normal" textLength="22.5" lengthAdjust="spacingAndGlyphs" stroke="#fff" stroke-width="0.3">83.35</text>
<rect x="1231" y="358" width="2" height="1" fill="#fff" shape-rendering="crispEdges"/>
<text x="1235.5" y="360.9" font-size="10" fill="#fff" text-anchor="start" font-weight="normal" textLength="22.5" lengthAdjust="spacingAndGlyphs" stroke="#fff" stroke-width="0.3">83.10</text>
<rect x="1231" y="397" width="2" height="1" fill="#fff" shape-rendering="crispEdges"/>
<text x="1235.5" y="399.6" font-size="10" fill="#fff" text-anchor="start" font-weight="normal" textLength="22.5" lengthAdjust="spacingAndGlyphs" stroke="#fff" stroke-width="0.3">82.85</text>
<rect x="1231" y="436" width="2" height="1" fill="#fff" shape-rendering="crispEdges"/>
<text x="1235.5" y="438.3" font-size="10" fill="#fff" text-anchor="start" font-weight="normal" textLength="22.5" lengthAdjust="spacingAndGlyphs" stroke="#fff" stroke-width="0.3">82.60</text>
<rect x="1231" y="474" width="2" height="1" fill="#fff" shape-rendering="crispEdges"/>
<text x="1235.5" y="477" font-size="10" fill="#fff" text-anchor="start" font-weight="normal" textLength="22.5" lengthAdjust="spacingAndGlyphs" stroke="#fff" stroke-width="0.3">82.35</text>
<rect x="1233" y="36" width="29" height="11" fill="#778899" shape-rendering="crispEdges"/>
<text x="1236" y="45" font-size="10" fill="#000" text-anchor="start" font-weight="normal" textLength="23" lengthAdjust="spacingAndGlyphs" stroke="#000" stroke-width="0.3">85.14</text>
<rect x="1233" y="92" width="29" height="11" fill="#fff" shape-rendering="crispEdges"/>
<text x="1236" y="101" font-size="10" fill="#000" text-anchor="start" font-weight="normal" textLength="23" lengthAdjust="spacingAndGlyphs" stroke="#000" stroke-width="0.3">84.78</text>
<g shape-rendering="crispEdges">
<rect x="10" y="535" width="582" height="1" fill="#ffff00" />
<rect x="10" y="593" width="582" height="1" fill="#ff1493" />
<rect x="10" y="616" width="582" height="1" fill="#f4a460" />
<line x1="11" y1="575.5" x2="592" y2="575.5" stroke="#da70d6" stroke-width="1" stroke-dasharray="3 3"/>
</g>
<polyline points="9.9,540.2 13.6,539.3 16.4,543.4 18.3,549.9 21.1,565.2 25.4,561.5 29.5,568.6 33.2,571.4 36,575.1 37.9,581.7 39.4,594.8 41.6,609.7 45.4,618.5 49.5,612.1 52.9,617.2 57,618.7 61.3,626.5 65.6,632.1 73.4,631.6 77.5,627.5 81.3,628 85,617.2 89.3,618.1 93,611.6 97.3,614.4 101.5,609.3 105.2,606.5 109.5,601.3 113.6,606.5 117.3,599.8 121.5,606.4 125.4,606.4 127.3,615.3 129.5,628.4 133.6,620 137.9,619.1 141.1,606.4 145.4,604.5 149.7,604.5 153.4,608.2 157.5,599.8 161.6,604.5 165.9,600.7 169.7,598.5 174,599.3 177.7,600.7 181.8,604.1 185.6,594.4 189.3,598.5 193.4,606.9 197.3,607.5 201.5,615.3 205.6,612.1 209.3,618.5 213.5,611.6 217.8,596.6 221.5,579.4 225.6,589.5 229.5,581.1 233.3,585.8 237.4,588.2 241.5,592.5 243.4,604.1 245.4,617.2 249.5,608.2 253.6,615.7 257.6,603.2 261.7,605.6 265.4,605.4 269.5,603.6 273.8,603.2 277.6,601.9 281.3,603.6 285.6,609.3 289.3,609.3 293.5,604.5 297.2,600.7 301.5,598.9 305,591 309.3,577.6 313.5,587.3 317.4,572.7 321.5,579.4 325.6,577 329.5,572.7 333.3,574.2 337.4,591 341.5,571.4 345.4,569 349.5,558.3 353.6,560.2 357.6,562.4 361.7,560.2 369.7,560.2 373.8,554 377.6,550.8 381.3,540.2 385.4,551.4 389.3,551.4 393.5,546.5 397.2,550.3 401,551.4 405.5,548.4 409.4,544.3 413.1,560.2 417.2,558.3 421.3,556.4 425.3,559.3 429.4,564.3 433.1,563.4 437.4,572.3 441.5,572.7 445.3,576.1 449.4,578.3 453.3,575.5 457,576.1 461.5,581.7 465.5,577.4 469.2,583.6 473.3,583.9 475.2,590.1 477,599.4 481.3,602.2 485.5,605.6 489.6,596.3 493.5,598.1 497,583.6 501.3,570.5 505.5,563.4 509.4,571.4 513.5,581.7 517.6,578.9 521.5,575.1 524.7,580.2" fill="none" stroke="#1e90ff" stroke-width="1.1" />
<rect x="595" y="529" width="37" height="11" fill="#ffff00" shape-rendering="crispEdges"/>
<text x="598" y="537.9" font-size="10" fill="#000" text-anchor="start" font-weight="normal" textLength="32" lengthAdjust="spacingAndGlyphs" stroke="#000" stroke-width="0.3">72.2222</text>
<rect x="595" y="587" width="37" height="11" fill="#ff1493" shape-rendering="crispEdges"/>
<text x="598" y="595.8" font-size="10" fill="#000" text-anchor="start" font-weight="normal" textLength="32" lengthAdjust="spacingAndGlyphs" stroke="#000" stroke-width="0.3">40.0000</text>
<rect x="595" y="610" width="37" height="11" fill="#f4a460" shape-rendering="crispEdges"/>
<text x="598" y="618.7" font-size="10" fill="#000" text-anchor="start" font-weight="normal" textLength="32" lengthAdjust="spacingAndGlyphs" stroke="#000" stroke-width="0.3">27.2222</text>
<text x="597" y="495" font-size="10" fill="#fff" text-anchor="start" font-weight="normal" textLength="13.5" lengthAdjust="spacingAndGlyphs" stroke="#fff" stroke-width="0.3">100</text>
<text x="594.5" y="578.2" font-size="10" fill="#fff" text-anchor="start" font-weight="normal" textLength="9.5" lengthAdjust="spacingAndGlyphs" stroke="#fff" stroke-width="0.3">50</text>
<text x="595.5" y="662" font-size="10" fill="#fff" text-anchor="start" font-weight="normal" textLength="4.6" lengthAdjust="spacingAndGlyphs" stroke="#fff" stroke-width="0.3">0</text>
<text x="13" y="498" font-size="10" fill="#fff" text-anchor="start" font-weight="normal" textLength="67" lengthAdjust="spacingAndGlyphs" stroke="#fff" stroke-width="0.3">RSI(14) 46.4542</text>
<g shape-rendering="crispEdges">
<rect x="648" y="532" width="582" height="1" fill="#ffff00" />
<rect x="648" y="594" width="582" height="1" fill="#ff1493" />
<rect x="648" y="612" width="582" height="1" fill="#f4a460" />
<line x1="649" y1="575.5" x2="1230" y2="575.5" stroke="#d3d3d3" stroke-width="1" stroke-dasharray="3 3"/>
</g>
<polyline points="647.9,581.3 651.6,582.6 655,575.5 659,574.2 663.2,573.8 667.1,572.3 671.2,572.3 675.3,568.6 677.4,576 679.3,589.5 681.5,564.9 683.4,552.7 687.5,546.2 691.4,537.4 695.5,543.4 699.3,552.1 703.4,552.7 707.3,570.5 711.4,566.2 715.2,569 719.5,573.3 723.2,570.8 727.3,561.5 731.4,568.2 735.3,582.6 739.5,579.4 743.2,581.7 747.5,575.1 751.2,563.4 755.3,558.3 759.5,560.2 763.4,561.5 767.5,559.8 771.6,564.9 775.5,553.6 779.3,546.2 783.4,544.3 787.5,544.3 791.4,545.6 795.5,535.3 797.4,548 799.6,567.7 803,547.7 807.3,547.5 811.4,549.9 815.5,556.4 819.5,554.2 823.6,552.1 827.3,546.5 831.4,554.6 835.3,560.2 839.5,556.4 841.3,564.9 843.4,576.2 847.5,576 851.6,585.8 855.3,586.4 859.6,593.5 863.4,591.6 867.5,591 871.2,590 875.5,573.3 879.3,575.1 883.4,580.2 887.3,580.7 891.4,584.5 895.1,571.4 899.4,568.2 903.6,574.2 907.3,577 911.6,579.8 915.7,583.6 919.4,577 923.6,556.4 927.5,561.1 931.6,557.4 935.7,557 940,547.1 943.4,549 947.5,559.3 951.6,567.7 955.5,570.5 959.3,570.1 963.4,562.1 967.5,557.4 971.4,556.1 975.5,565.8 979.6,572.3 983.6,589.5 987.7,578.9 991.4,573.3 995.1,571 999.4,579.4 1003.6,577.4 1007.7,579.4 1011.6,579.4 1015.3,583.6 1019.4,608.4 1023.7,605 1027.9,602.8 1031.6,605.5 1035.6,600 1039.4,589.8 1043.5,572.3 1047.4,554.6 1051.5,557.4 1055.6,559.3 1059.3,559.3 1063.3,545.2 1067.4,547.1 1071.5,543.4 1075.4,541.5 1079.5,546.2 1083.6,545.2 1087.4,556.1 1091.3,537.8 1095.4,536.4 1099.5,540.2 1103.5,539.3 1107.6,544.3 1111.3,544.3 1115.4,537.8 1119.3,554.6 1123.5,554.6 1127.2,559.8 1131,561.5 1135,558.3 1139.3,552.3 1143.5,550.8 1147.4,548 1151.5,539.3 1155.2,549.3 1159.3,551.8 1162.7,553.6" fill="none" stroke="#1e90ff" stroke-width="1.1" />
<rect x="1233" y="526" width="28" height="11" fill="#ffff00" shape-rendering="crispEdges"/>
<text x="1236" y="534.9" font-size="10" fill="#000" text-anchor="start" font-weight="normal" textLength="23" lengthAdjust="spacingAndGlyphs" stroke="#000" stroke-width="0.3">73.89</text>
<rect x="1233" y="588" width="28" height="11" fill="#ff1493" shape-rendering="crispEdges"/>
<text x="1236" y="596.8" font-size="10" fill="#000" text-anchor="start" font-weight="normal" textLength="23" lengthAdjust="spacingAndGlyphs" stroke="#000" stroke-width="0.3">39.44</text>
<rect x="1233" y="606" width="28" height="11" fill="#f4a460" shape-rendering="crispEdges"/>
<text x="1236" y="614.7" font-size="10" fill="#000" text-anchor="start" font-weight="normal" textLength="23" lengthAdjust="spacingAndGlyphs" stroke="#000" stroke-width="0.3">29.44</text>
<text x="1235" y="495" font-size="10" fill="#fff" text-anchor="start" font-weight="normal" textLength="13.5" lengthAdjust="spacingAndGlyphs" stroke="#fff" stroke-width="0.3">100</text>
<text x="1232.5" y="578.2" font-size="10" fill="#fff" text-anchor="start" font-weight="normal" textLength="9.5" lengthAdjust="spacingAndGlyphs" stroke="#fff" stroke-width="0.3">50</text>
<text x="1233.5" y="662" font-size="10" fill="#fff" text-anchor="start" font-weight="normal" textLength="4.6" lengthAdjust="spacingAndGlyphs" stroke="#fff" stroke-width="0.3">0</text>
<text x="651" y="498" font-size="10" fill="#fff" text-anchor="start" font-weight="normal" textLength="67" lengthAdjust="spacingAndGlyphs" stroke="#fff" stroke-width="0.3">RSI(14) 61.8339</text>
<g shape-rendering="crispEdges">
<line x1="360.4" y1="285.5" x2="616" y2="354.7" stroke="#ff0" stroke-width="1" />
<line x1="283" y1="472.5" x2="628" y2="357.4" stroke="#ff0" stroke-width="1" />
<line x1="289.8" y1="467" x2="408.2" y2="304.3" stroke="#ff0" stroke-width="1" />
<line x1="408.2" y1="304.3" x2="398.5" y2="311.3" stroke="#ff0" stroke-width="1" />
<line x1="408.2" y1="304.3" x2="404.5" y2="315.7" stroke="#ff0" stroke-width="1" />
<line x1="408.2" y1="304.3" x2="482.9" y2="405.5" stroke="#ff0" stroke-width="1" />
<line x1="482.9" y1="405.5" x2="479.1" y2="394.1" stroke="#ff0" stroke-width="1" />
<line x1="482.9" y1="405.5" x2="473.1" y2="398.5" stroke="#ff0" stroke-width="1" />
<line x1="482.9" y1="405.5" x2="505.6" y2="329.5" stroke="#ff0" stroke-width="1" />
<line x1="505.6" y1="329.5" x2="498.8" y2="339.4" stroke="#ff0" stroke-width="1" />
<line x1="505.6" y1="329.5" x2="505.9" y2="341.5" stroke="#ff0" stroke-width="1" />
<line x1="505.6" y1="329.5" x2="521.3" y2="382" stroke="#ff0" stroke-width="1" />
<line x1="521.3" y1="382" x2="521.6" y2="370" stroke="#ff0" stroke-width="1" />
<line x1="521.3" y1="382" x2="514.5" y2="372.1" stroke="#ff0" stroke-width="1" />
<line x1="521.3" y1="382" x2="551.6" y2="342.6" stroke="#ff0" stroke-width="1" />
<line x1="551.6" y1="342.6" x2="541.7" y2="349.4" stroke="#ff0" stroke-width="1" />
<line x1="551.6" y1="342.6" x2="547.6" y2="353.9" stroke="#ff0" stroke-width="1" />
<line x1="551.6" y1="342.6" x2="572" y2="474" stroke="#ff0" stroke-width="1" />
<line x1="572" y1="474" x2="573.9" y2="462.2" stroke="#ff0" stroke-width="1" />
<line x1="572" y1="474" x2="566.6" y2="463.3" stroke="#ff0" stroke-width="1" />
<line x1="572" y1="474" x2="627.6" y2="125.1" stroke="#ff0" stroke-width="1" />
<line x1="627.6" y1="125.1" x2="622.1" y2="135.8" stroke="#ff0" stroke-width="1" />
<line x1="627.6" y1="125.1" x2="629.5" y2="137" stroke="#ff0" stroke-width="1" />
<rect x="505" y="146" width="1" height="1" fill="#ff0" />
</g>
<path d="M0 0.5L8.5 10.5" stroke="#fff" stroke-width="3.2" fill="none"/>
<polygon points="10.6,6.8 10.6,13.5 3.8,13.5" fill="#000" stroke="#fff" stroke-width="0.7"/>
<path d="M0 0.5L8.5 10.5" stroke="#000" stroke-width="1.4" fill="none"/>
<path d="M0 1.8L4 0" stroke="#fff" stroke-width="1" fill="none"/>
</svg>
</body></html>
